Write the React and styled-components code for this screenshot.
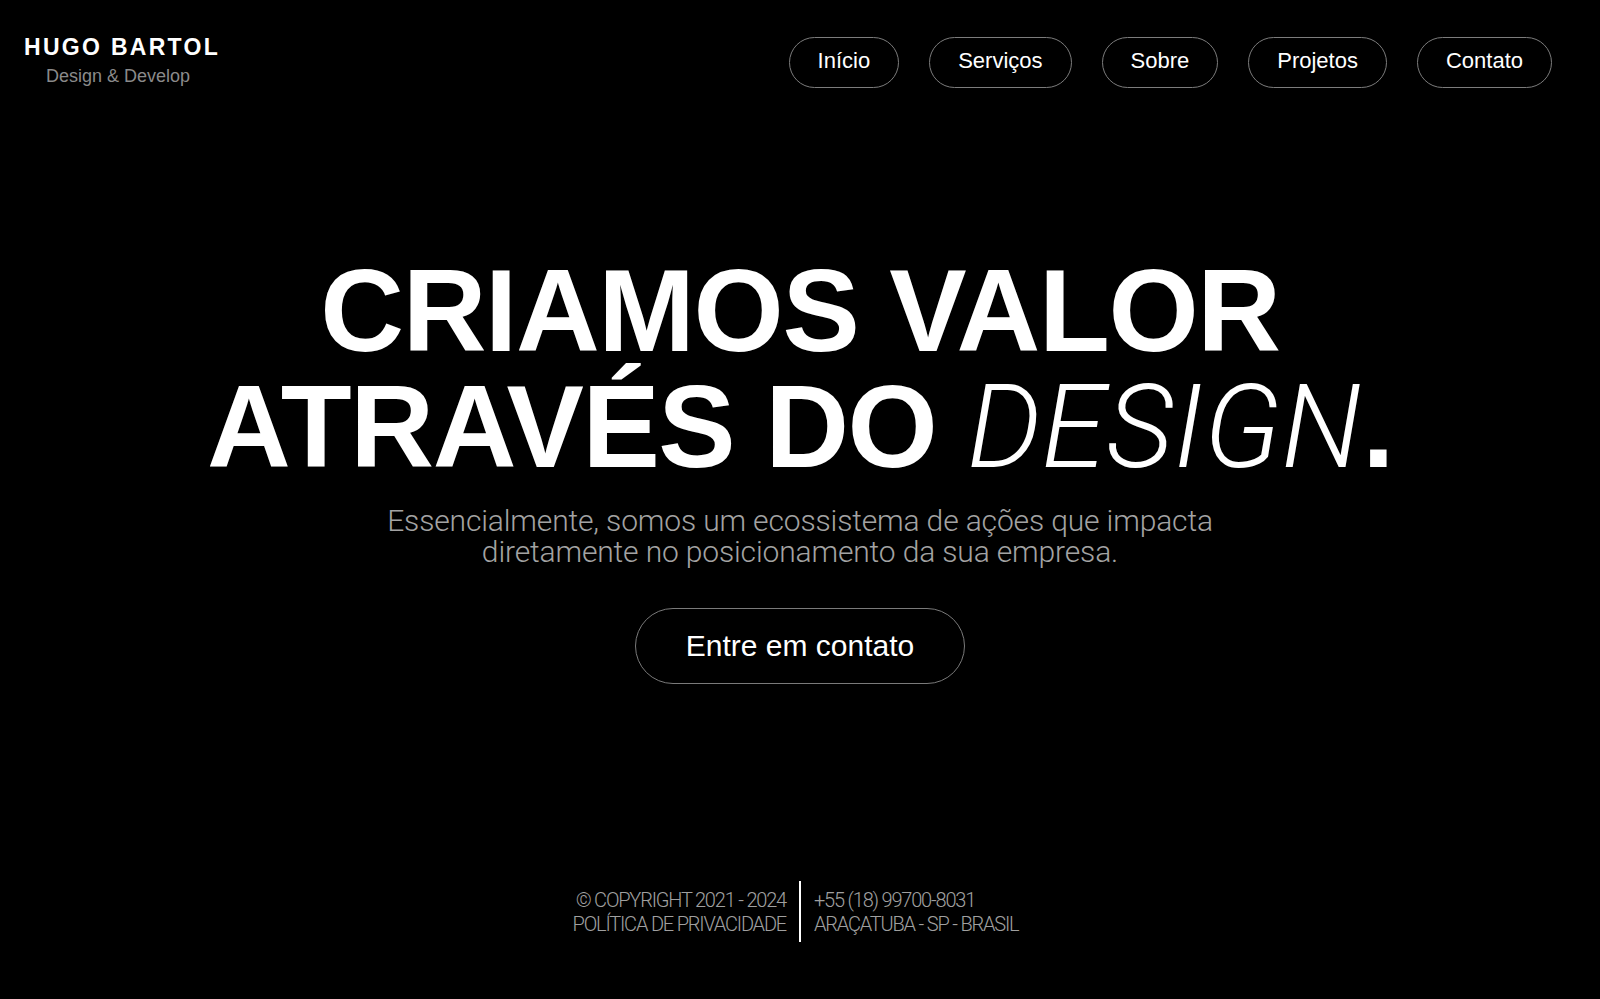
import React from "react";
import styled, { createGlobalStyle } from "styled-components";

const GlobalStyle = createGlobalStyle`
  * { box-sizing: border-box; }
  html, body { margin: 0; padding: 0; background: #000; }
  body { color: #fff; font-family: "Liberation Sans", Arial, sans-serif; }
`;

const Page = styled.div`
  min-height: 100vh;
  display: flex;
  flex-direction: column;
  background: #000;
`;

const Header = styled.header`
  display: flex;
  justify-content: space-between;
  align-items: flex-start;
  padding: 33px 48px 0 24px;
`;

const Brand = styled.div`
  display: flex;
  flex-direction: column;
  align-items: flex-start;
  gap: 4px;
`;

const BrandName = styled.div`
  font-family: "Liberation Sans", Arial, sans-serif;
  font-weight: 700;
  font-size: 23px;
  line-height: 28px;
  letter-spacing: 0.1em;
  color: #fff;
`;

const Tagline = styled.div`
  padding-left: 22px;
  font-family: "Liberation Sans", Arial, sans-serif;
  font-size: 18px;
  line-height: 22px;
  color: #8a8a8a;
`;

const Nav = styled.nav`
  display: flex;
  gap: 30px;
  padding-top: 4px;
`;

const NavLink = styled.a`
  display: inline-flex;
  align-items: center;
  height: 51px;
  padding: 0 28px 3px;
  border: 1px solid #7c7c7c;
  border-radius: 999px;
  font-family: "Liberation Sans", Arial, sans-serif;
  font-size: 22px;
  color: #fff;
  text-decoration: none;
`;

const Hero = styled.main`
  display: flex;
  flex-direction: column;
  align-items: center;
  margin-top: 165px;
`;

const Headline = styled.h1`
  margin: 0;
  text-align: center;
  font-family: "Liberation Sans", Arial, sans-serif;
  font-weight: 700;
  font-size: 116px;
  line-height: 116px;
  letter-spacing: -0.012em;
  color: #fff;
`;

const Accent = styled.span`
  font-family: Roboto, "Liberation Sans", sans-serif;
  font-style: italic;
  font-weight: 300;
  letter-spacing: 0.005em;
`;

const Lead = styled.p`
  margin: 20px 0 0;
  text-align: center;
  font-family: Roboto, "Liberation Sans", sans-serif;
  font-weight: 300;
  font-size: 30px;
  line-height: 31px;
  letter-spacing: -0.005em;
  color: #a3a3a3;
`;

const CtaButton = styled.a`
  margin-top: 41px;
  display: inline-flex;
  align-items: center;
  justify-content: center;
  width: 330px;
  height: 76px;
  padding-bottom: 1px;
  border: 1px solid #7a7a7a;
  border-radius: 999px;
  font-family: "Liberation Sans", Arial, sans-serif;
  font-size: 30px;
  color: #fff;
  text-decoration: none;
`;

const Footer = styled.footer`
  margin-top: auto;
  padding-bottom: 57px;
  display: grid;
  grid-template-columns: 1fr auto 1fr;
  column-gap: 13px;
  align-items: center;
`;

const FooterCol = styled.div`
  display: flex;
  flex-direction: column;
  align-items: ${(p) => (p.$align === "right" ? "flex-end" : "flex-start")};
  font-family: Roboto, "Liberation Sans", sans-serif;
  font-weight: 300;
  font-size: 20px;
  line-height: 24px;
  letter-spacing: -0.06em;
  color: #a0a0a0;
  text-transform: uppercase;
`;

const Divider = styled.div`
  width: 2px;
  height: 61px;
  background: #fff;
`;

const navItems = ["Início", "Serviços", "Sobre", "Projetos", "Contato"];

export default function App() {
  return (
    <>
      <GlobalStyle />
      <Page>
        <Header>
          <Brand>
            <BrandName>HUGO BARTOL</BrandName>
            <Tagline>Design &amp; Develop</Tagline>
          </Brand>
          <Nav>
            {navItems.map((item) => (
              <NavLink key={item} href="#">
                {item}
              </NavLink>
            ))}
          </Nav>
        </Header>
        <Hero>
          <Headline>
            CRIAMOS VALOR
            <br />
            ATRAVÉS DO <Accent>DESIGN</Accent>.
          </Headline>
          <Lead>
            Essencialmente, somos um ecossistema de ações que impacta
            <br />
            diretamente no posicionamento da sua empresa.
          </Lead>
          <CtaButton href="#">Entre em contato</CtaButton>
        </Hero>
        <Footer>
          <FooterCol $align="right">
            <span>© Copyright 2021 - 2024</span>
            <span>Política de privacidade</span>
          </FooterCol>
          <Divider />
          <FooterCol $align="left">
            <span>+55 (18) 99700-8031</span>
            <span>Araçatuba - SP - Brasil</span>
          </FooterCol>
        </Footer>
      </Page>
    </>
  );
}
